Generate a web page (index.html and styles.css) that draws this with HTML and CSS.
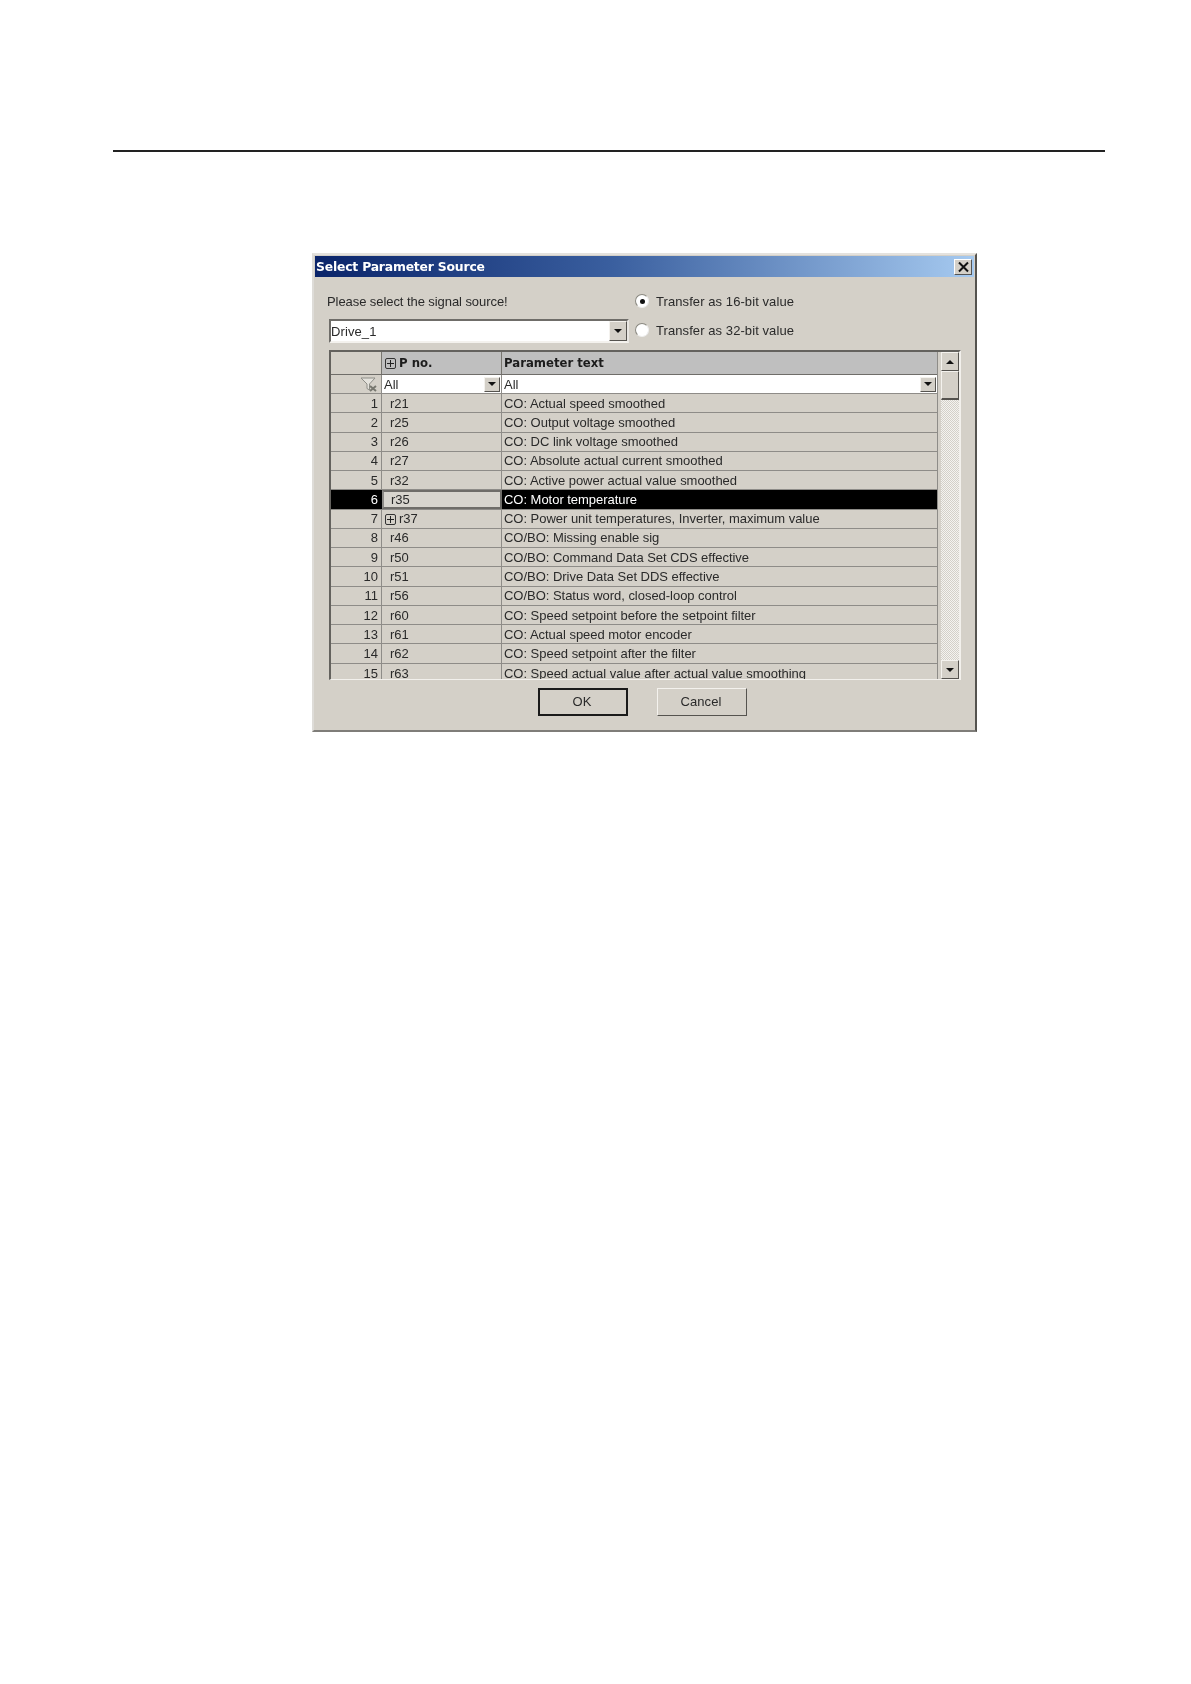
FILE: index.html
```html
<!DOCTYPE html>
<html lang="en">
<head>
<meta charset="utf-8">
<title>Select Parameter Source</title>
<link rel="stylesheet" href="styles.css">
</head>
<body>
<hr class="rule">
<div class="dialog">
  <div class="titlebar">
    <span class="title">Select Parameter Source</span>
    <span class="close"><svg width="13" height="12" viewBox="0 0 13 12"><path d="M2 1.5 L11 10.5 M11 1.5 L2 10.5" stroke="#111" stroke-width="2" fill="none"/></svg></span>
  </div>
  <div class="content">
    <div class="toprow">
      <div class="sourcecol">
        <div class="prompt">Please select the signal source!</div>
        <div class="combo"><span class="combotext">Drive_1</span><span class="dropbtn"><i class="down"></i></span></div>
      </div>
      <div class="radios">
        <div class="radiorow"><span class="radio on"></span><span>Transfer as 16-bit value</span></div>
        <div class="radiorow"><span class="radio"></span><span>Transfer as 32-bit value</span></div>
      </div>
    </div>
    <div class="well">
      <div class="grid">
        <div class="gridrow head">
          <div class="c num"></div>
          <div class="c pno"><span class="plus"></span><b>P no.</b></div>
          <div class="c text"><b>Parameter text</b></div>
        </div>
        <div class="gridrow filter">
          <div class="c num"><svg class="funnel" width="20" height="15" viewBox="0 0 20 15"><path d="M1 1 H15 L9.5 7 V13 L7 11.5 V7 Z" fill="#e4e2dc" stroke="#8e8e88"/><path d="M10 9 L16 14 M16 9 L10 14" stroke="#77776f" stroke-width="2"/></svg></div>
          <div class="c pno"><span>All</span><span class="dropbtn small"><i class="down"></i></span></div>
          <div class="c text"><span>All</span><span class="dropbtn small"><i class="down"></i></span></div>
        </div>
        <div class="rows">
          <div class="gridrow"><div class="c num">1</div><div class="c pno val">r21</div><div class="c text">CO: Actual speed smoothed</div></div>
          <div class="gridrow"><div class="c num">2</div><div class="c pno val">r25</div><div class="c text">CO: Output voltage smoothed</div></div>
          <div class="gridrow"><div class="c num">3</div><div class="c pno val">r26</div><div class="c text">CO: DC link voltage smoothed</div></div>
          <div class="gridrow"><div class="c num">4</div><div class="c pno val">r27</div><div class="c text">CO: Absolute actual current smoothed</div></div>
          <div class="gridrow"><div class="c num">5</div><div class="c pno val">r32</div><div class="c text">CO: Active power actual value smoothed</div></div>
          <div class="gridrow selected"><div class="c num">6</div><div class="c pno val">r35</div><div class="c text">CO: Motor temperature</div></div>
          <div class="gridrow"><div class="c num">7</div><div class="c pno"><span class="plus"></span>r37</div><div class="c text">CO: Power unit temperatures, Inverter, maximum value</div></div>
          <div class="gridrow"><div class="c num">8</div><div class="c pno val">r46</div><div class="c text">CO/BO: Missing enable sig</div></div>
          <div class="gridrow"><div class="c num">9</div><div class="c pno val">r50</div><div class="c text">CO/BO: Command Data Set CDS effective</div></div>
          <div class="gridrow"><div class="c num">10</div><div class="c pno val">r51</div><div class="c text">CO/BO: Drive Data Set DDS effective</div></div>
          <div class="gridrow"><div class="c num">11</div><div class="c pno val">r56</div><div class="c text">CO/BO: Status word, closed-loop control</div></div>
          <div class="gridrow"><div class="c num">12</div><div class="c pno val">r60</div><div class="c text">CO: Speed setpoint before the setpoint filter</div></div>
          <div class="gridrow"><div class="c num">13</div><div class="c pno val">r61</div><div class="c text">CO: Actual speed motor encoder</div></div>
          <div class="gridrow"><div class="c num">14</div><div class="c pno val">r62</div><div class="c text">CO: Speed setpoint after the filter</div></div>
          <div class="gridrow last"><div class="c num">15</div><div class="c pno val">r63</div><div class="c text">CO: Speed actual value after actual value smoothing</div></div>
        </div>
      </div>
      <div class="scrollbar">
        <span class="sbbtn"><i class="up"></i></span>
        <span class="thumb"></span>
        <span class="track"></span>
        <span class="sbbtn"><i class="down"></i></span>
      </div>
    </div>
    <div class="buttons">
      <button class="btn default" type="button">OK</button>
      <button class="btn" type="button">Cancel</button>
    </div>
  </div>
</div>
</body>
</html>
```
FILE: styles.css
```css
html, body { margin: 0; padding: 0; background: #fff; }
body {
  width: 1191px;
  height: 1684px;
  overflow: hidden;
  padding-top: 150px;
  box-sizing: border-box;
  font-family: "Liberation Sans", Arial, sans-serif;
  color: #2a2a2a;
}
.rule {
  margin: 0 0 0 113px;
  width: 992px;
  height: 2px;
  border: 0;
  background: #222;
}
.dialog {
  margin: 101px 0 0 312px;
  width: 665px;
  height: 479px;
  box-sizing: border-box;
  background: #d4d0c8;
  border: 2px solid;
  border-color: #e4e2de #55534f #7f7d79 #dedcd8;
  padding: 1px;
  display: flex;
  flex-direction: column;
  font-size: 13px;
  filter: blur(0.35px);
}
.titlebar {
  height: 21px;
  flex: none;
  display: flex;
  align-items: center;
  justify-content: space-between;
  padding: 0 2px;
  background: linear-gradient(90deg, #0a246a 0%, #3a5f9f 45%, #a6caf0 100%);
}
.title {
  color: #fff;
  font-family: "DejaVu Sans", sans-serif;
  font-weight: bold;
  font-size: 12.4px;
  letter-spacing: -0.2px;
  margin-left: -1px;
}
.close {
  width: 18px;
  height: 16px;
  display: flex;
  align-items: center;
  justify-content: center;
  background: #d4d0c8;
  border: 1px solid;
  border-color: #fff #555 #555 #fff;
  box-sizing: border-box;
}
.content {
  flex: 1;
  display: flex;
  flex-direction: column;
  padding: 15px 14px 0 13px;
  min-height: 0;
}
.toprow { display: flex; height: 58px; flex: none; }
.sourcecol { width: 315px; flex: none; padding-top: 1px; }
.prompt { height: 18px; line-height: 18px; letter-spacing: -0.07px; margin-left: -1px; }
.combo {
  margin: 8px 0 0 1px;
  width: 300px;
  height: 24px;
  box-sizing: border-box;
  background: #fff;
  border: 2px solid;
  border-color: #6f6d69 #e8e6e2 #f4f2ee #6f6d69;
  display: flex;
  align-items: center;
  justify-content: space-between;
}
.combotext { letter-spacing: 0.1px; }
.dropbtn {
  width: 18px;
  height: 20px;
  box-sizing: border-box;
  flex: none;
  display: flex;
  align-items: center;
  justify-content: center;
  background: #d4d0c8;
  border: 1px solid;
  border-color: #f4f2ee #55534f #55534f #f4f2ee;
}
.dropbtn.small { height: 15px; width: 16px; }
.down, .up { display: block; width: 0; height: 0; border-left: 4px solid transparent; border-right: 4px solid transparent; }
.down { border-top: 4px solid #111; }
.up { border-bottom: 4px solid #111; }
.radios { margin-left: -8px; }
.radiorow { display: flex; align-items: center; height: 29px; margin-top: -5px; margin-bottom: 5px; letter-spacing: 0.08px; }
.radio {
  width: 12px;
  height: 12px;
  margin: -1px 7px 0 0;
  border-radius: 50%;
  background: #fff;
  border: 1px solid #8a8880;
  border-right-color: #eee;
  border-bottom-color: #eee;
  box-sizing: content-box;
  display: flex;
  align-items: center;
  justify-content: center;
}
.radio.on::after { content: ""; width: 5px; height: 5px; border-radius: 50%; background: #111; }
.well {
  height: 330px;
  flex: none;
  box-sizing: border-box;
  border: 2px solid;
  border-color: #64625e #f2f0ec #f2f0ec #64625e;
  border-bottom-width: 1px;
  display: flex;
  background: #d4d0c8;
  margin-left: 1px;
  width: 632px;
  overflow: hidden;
}
.grid { width: 607px; flex: none; box-sizing: border-box; overflow: hidden; border-right: 1px solid #8e8c88; }
.gridrow {
  display: grid;
  grid-template-columns: 51px 120px 1fr;
  height: 19.27px;
  box-sizing: border-box;
  line-height: 17px;
  font-size: 13px;
  letter-spacing: -0.03px;
  border-bottom: 1px solid #8e8c88;
}
.c { overflow: hidden; white-space: nowrap; border-right: 1px solid #8e8c88; display: flex; align-items: center; box-sizing: border-box; }
.c:last-child { border-right: 0; }
.num { justify-content: flex-end; padding-right: 3px; }
.pno { padding-left: 8px; }
.text { padding-left: 2px; }
.gridrow.head { height: 23px; border-bottom: 1px solid #6f6d69; }
.head .c { background: #bfbfbf; border-right-color: #77756f; }
.head .num { background: #d4d0c8; }
.head b { color: #1c1c1c; font-family: "DejaVu Sans", sans-serif; font-weight: bold; font-size: 11.7px; letter-spacing: 0; }
.gridrow.filter { height: 19px; }
.filter .c { justify-content: space-between; background: #fff; padding-right: 1px; }
.filter .pno { padding-left: 2px; }
.filter .num { background: #d4d0c8; justify-content: flex-end; padding-right: 1px; }
.gridrow.last { border-bottom: 0; }
.selected .num, .selected .text { background: #000; color: #fff; border-color: #000; }
.selected .pno { border: 2px solid #6f6d69; border-left-color: #8e8c88; background: #d8d5ce; padding-left: 7px; }
.plus {
  width: 11px;
  height: 11px;
  margin: 1px 3px 0 -5px;
  box-sizing: border-box;
  border: 1px solid #333;
  border-radius: 2px;
  flex: none;
  background:
    linear-gradient(#222, #222) center / 7px 1px no-repeat,
    linear-gradient(#222, #222) center / 1px 7px no-repeat;
}
.scrollbar {
  width: 18px;
  flex: none;
  display: flex;
  flex-direction: column;
  margin-left: 3px;
}
.sbbtn {
  height: 19px;
  flex: none;
  box-sizing: border-box;
  display: flex;
  align-items: center;
  justify-content: center;
  background: #d4d0c8;
  border: 1px solid;
  border-color: #f4f2ee #55534f #55534f #f4f2ee;
}
.thumb {
  height: 29px;
  flex: none;
  box-sizing: border-box;
  background: #d4d0c8;
  border: 1px solid;
  border-color: #f4f2ee #55534f #55534f #f4f2ee;
  border-bottom-width: 2px;
}
.track {
  flex: 1;
  background-color: #ecebe7;
  background-image: repeating-conic-gradient(#d4d0c8 0% 25%, #f4f3f0 0% 50%);
  background-size: 2px 2px;
}
.buttons {
  display: flex;
  gap: 29px;
  margin: 8px 0 0 210px;
}
.btn {
  width: 90px;
  height: 28px;
  font: 13px "Liberation Sans", Arial, sans-serif;
  color: #2a2a2a;
  background: #d4d0c8;
  border: 1px solid;
  border-color: #f4f2ee #55534f #55534f #f4f2ee;
  padding: 0 2px 1px 0;
  letter-spacing: 0.1px;
}
.btn.default { border: 2px solid #1a1a1a; }
```
